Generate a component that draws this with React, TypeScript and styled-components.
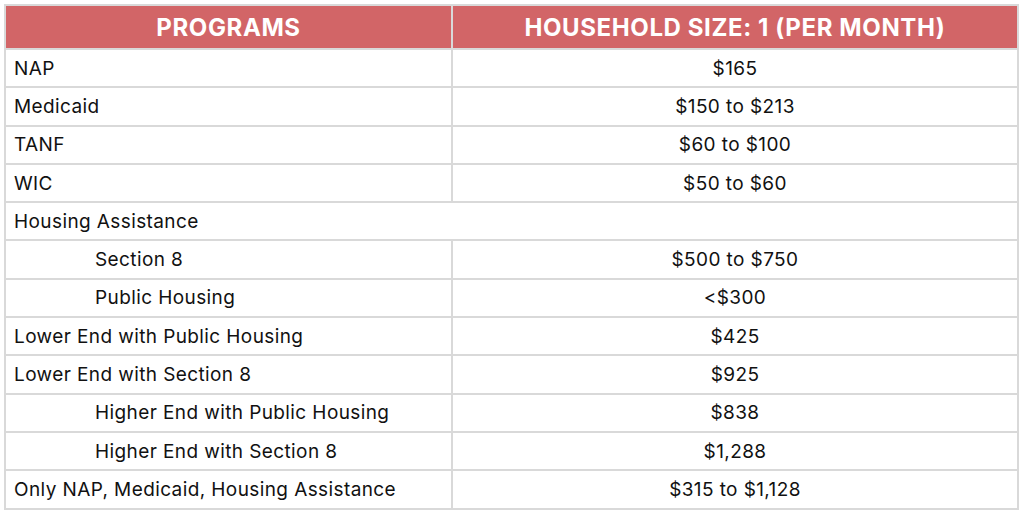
import React from "react";
import styled, { createGlobalStyle } from "styled-components";

const GlobalStyle = createGlobalStyle`
  html, body {
    margin: 0;
    padding: 0;
    background: #ffffff;
  }
  body {
    font-family: "Inter", "Liberation Sans", sans-serif;
  }
`;

const Page = styled.div`
  width: 1024px;
  height: 514px;
  padding: 4px 5px 0 4px;
  box-sizing: border-box;
`;

const Table = styled.table`
  width: 1015px;
  border-collapse: collapse;
  table-layout: fixed;
  border: 2px solid #d9d9d9;
`;

const HeadCell = styled.th`
  background-color: #d26567;
  color: #ffffff;
  font-weight: 700;
  font-size: 24px;
  height: 42px;
  padding: 0;
  text-align: center;
  border: 2px solid #d9d9d9;
  letter-spacing: 0.6px;
`;

const Cell = styled.td<{ $indent?: boolean; $center?: boolean }>`
  height: 36.3px;
  padding: 0 0 0 ${(p) => (p.$indent ? "89px" : "8px")};
  font-size: 19px;
  letter-spacing: 0.4px;
  color: #111111;
  text-align: ${(p) => (p.$center ? "center" : "left")};
  border: 2px solid #d9d9d9;
  ${(p) => p.$center && "padding: 0;"}
`;

type Row = { label: string; value?: string; indent?: boolean };

const rows: Row[] = [
  { label: "NAP", value: "$165" },
  { label: "Medicaid", value: "$150 to $213" },
  { label: "TANF", value: "$60 to $100" },
  { label: "WIC", value: "$50 to $60" },
  { label: "Housing Assistance" },
  { label: "Section 8", value: "$500 to $750", indent: true },
  { label: "Public Housing", value: "<$300", indent: true },
  { label: "Lower End with Public Housing", value: "$425" },
  { label: "Lower End with Section 8", value: "$925" },
  { label: "Higher End with Public Housing", value: "$838", indent: true },
  { label: "Higher End with Section 8", value: "$1,288", indent: true },
  { label: "Only NAP, Medicaid, Housing Assistance", value: "$315 to $1,128" },
];

export default function App() {
  return (
    <>
      <GlobalStyle />
      <Page>
        <Table>
          <colgroup>
            <col style={{ width: "447px" }} />
            <col />
          </colgroup>
          <thead>
            <tr>
              <HeadCell>PROGRAMS</HeadCell>
              <HeadCell>HOUSEHOLD SIZE: 1 (PER MONTH)</HeadCell>
            </tr>
          </thead>
          <tbody>
            {rows.map((r) =>
              r.value === undefined ? (
                <tr key={r.label}>
                  <Cell colSpan={2}>{r.label}</Cell>
                </tr>
              ) : (
                <tr key={r.label}>
                  <Cell $indent={r.indent}>{r.label}</Cell>
                  <Cell $center>{r.value}</Cell>
                </tr>
              )
            )}
          </tbody>
        </Table>
      </Page>
    </>
  );
}
